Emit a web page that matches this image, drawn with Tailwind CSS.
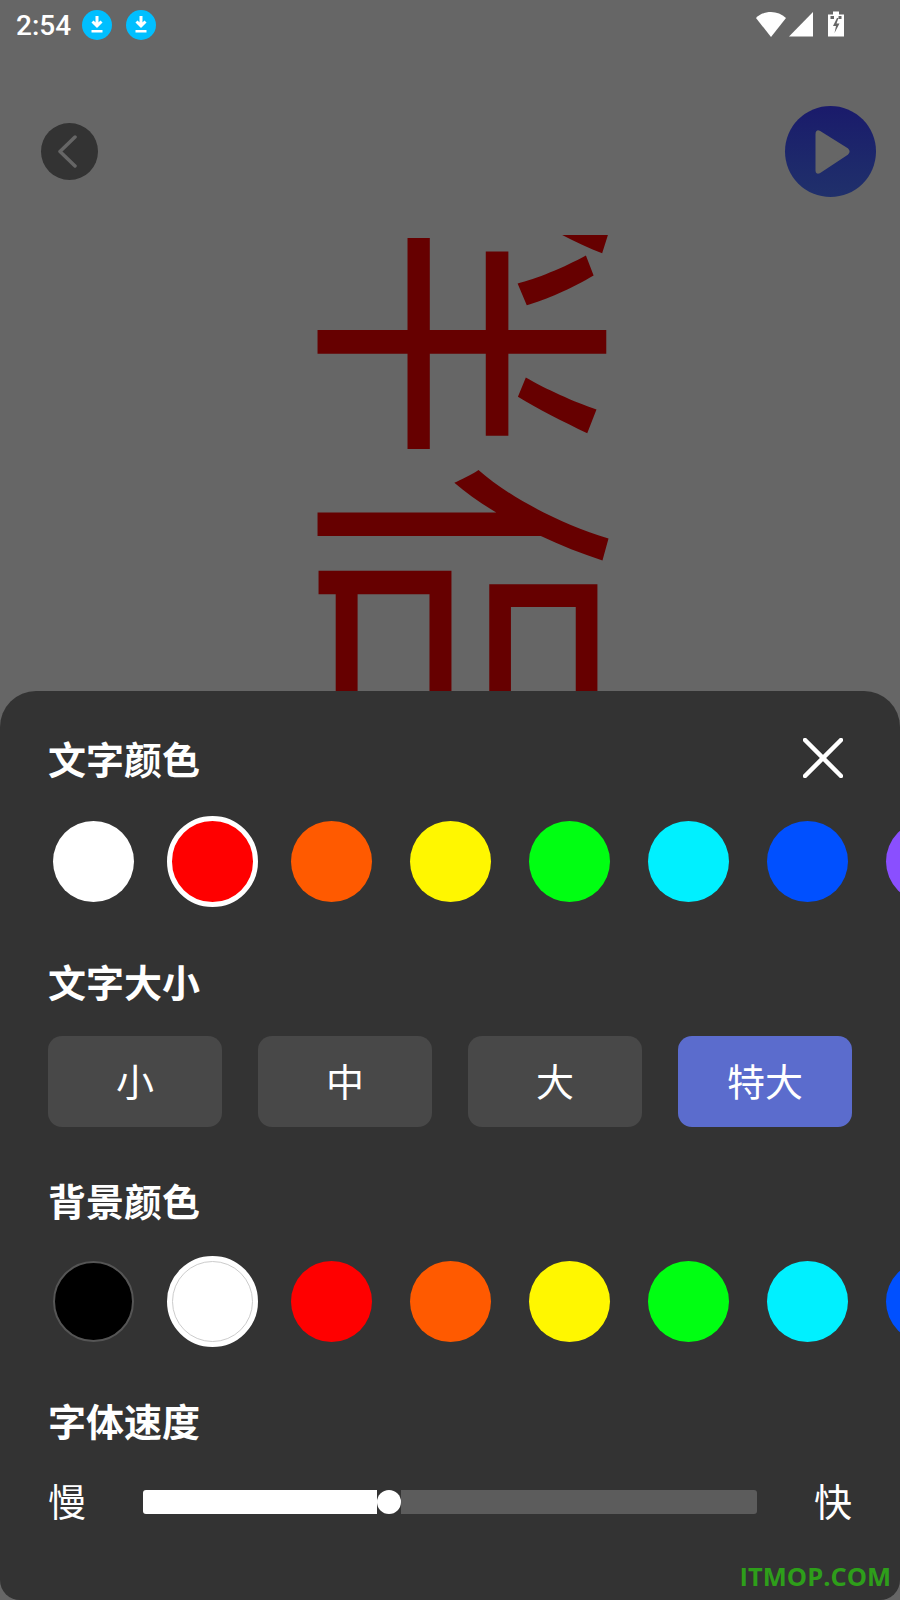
<!DOCTYPE html>
<html lang="zh">
<head>
<meta charset="utf-8">
<script src="https://cdn.jsdelivr.net/npm/@tailwindcss/browser@4"></script>
</head>
<body class="m-0">
<div class="w-[900px] h-[1600px] flex flex-col overflow-hidden bg-[#666666] font-['Noto_Sans_CJK_SC','Noto_Sans',sans-serif]">
  <div class="relative h-[691px] shrink-0">
    <div class="absolute left-0 right-0 top-[235px] bottom-0 overflow-hidden">
      <div class="absolute left-[640px] top-[-92px] origin-top-left rotate-90 whitespace-nowrap text-[318px] leading-none text-[#660000]">伴侣</div>
    </div>
    <div class="relative flex items-center h-[50px] pl-4 text-white">
      <span class="font-['Roboto',sans-serif] font-medium text-[28px] leading-none mt-[1px]">2:54</span>
      <svg class="ml-[11px] -mt-[1px]" width="30" height="30" viewBox="0 0 30 30"><circle cx="15" cy="15" r="15" fill="#00bfff"/><path d="M15 6v10M10.500 11.500l4.500 4.500 4.500-4.500" fill="none" stroke="#fff" stroke-width="3"/><rect x="9.500" y="20" width="11" height="2.500" fill="#fff"/></svg>
      <svg class="ml-[14px] -mt-[1px]" width="30" height="30" viewBox="0 0 30 30"><circle cx="15" cy="15" r="15" fill="#00bfff"/><path d="M15 6v10M10.500 11.500l4.500 4.500 4.500-4.500" fill="none" stroke="#fff" stroke-width="3"/><rect x="9.500" y="20" width="11" height="2.500" fill="#fff"/></svg>
      <div class="ml-auto mr-[52px] flex items-start h-[30px]">
        <svg width="92" height="30" viewBox="0 0 92 30" class="mt-[1px]"><path d="M0 6.500C8 -1.500 22 -1.500 30 6.500L15 25.500Z" fill="#fff" transform="translate(0 0.500)"/><path d="M33 25.500L57 1V25.500Z" fill="#fff"/><path d="M72 3.500h5V0.500h6v3h5V25.500H72Z" fill="#fff"/><path d="M81 7l-4 8h3l-1.500 7 5-9.500h-3l2-5.500z" fill="#666"/><rect x="74.500" y="5" width="3.500" height="3" fill="#666"/><rect x="82.500" y="5" width="3" height="3" fill="#666"/></svg>
      </div>
    </div>
    <div class="relative flex items-center justify-between mt-[56px] pl-[41px] pr-[24px]">
      <div class="w-[57px] h-[57px] rounded-full bg-[#333333] flex items-center justify-center">
        <svg width="20" height="33" viewBox="0 0 20 33" class="-ml-[4px]"><path d="M17 2L2 16.500L17 31" fill="none" stroke="#666" stroke-width="3.500" stroke-linecap="round" stroke-linejoin="round"/></svg>
      </div>
      <div class="w-[91px] h-[91px] rounded-full bg-gradient-to-b from-[#1a1a6b] to-[#20306b] flex items-center justify-center">
        <svg width="91" height="91" viewBox="0 0 91 91"><path d="M34 26L62 43.500Q64 45.500 62 47.500L34 66Q32 67 32 64.500V28Q32 25 34 26Z" fill="#666" stroke="#666" stroke-width="3" stroke-linejoin="round"/></svg>
      </div>
    </div>
  </div>

  <div class="relative flex-1 bg-[#333333] rounded-t-[36px] rounded-b-[20px] pt-[45px] text-white">
    <div class="flex items-center justify-between pl-[48px] pr-[57px] h-[44px]">
      <h2 class="text-[38px] font-bold leading-none">文字颜色</h2>
      <svg width="40" height="40" viewBox="0 0 40 40"><path d="M2 2L38 38M38 2L2 38" stroke="#fff" stroke-width="4.500" stroke-linecap="round"/></svg>
    </div>
    <div class="mt-[36px] pl-[48px] flex gap-[28px] overflow-hidden">
      <div class="shrink-0 w-[91px] h-[91px] flex items-center justify-center"><div class="w-[81px] h-[81px] rounded-full bg-white"></div></div>
      <div class="shrink-0 w-[91px] h-[91px] rounded-full border-[5px] border-white bg-[#ff0000]"></div>
      <div class="shrink-0 w-[91px] h-[91px] flex items-center justify-center"><div class="w-[81px] h-[81px] rounded-full bg-[#ff5a00]"></div></div>
      <div class="shrink-0 w-[91px] h-[91px] flex items-center justify-center"><div class="w-[81px] h-[81px] rounded-full bg-[#fff700]"></div></div>
      <div class="shrink-0 w-[91px] h-[91px] flex items-center justify-center"><div class="w-[81px] h-[81px] rounded-full bg-[#00ff12]"></div></div>
      <div class="shrink-0 w-[91px] h-[91px] flex items-center justify-center"><div class="w-[81px] h-[81px] rounded-full bg-[#00f0ff]"></div></div>
      <div class="shrink-0 w-[91px] h-[91px] flex items-center justify-center"><div class="w-[81px] h-[81px] rounded-full bg-[#0050ff]"></div></div>
      <div class="shrink-0 w-[91px] h-[91px] flex items-center justify-center"><div class="w-[81px] h-[81px] rounded-full bg-[#8a4fff]"></div></div>
    </div>

    <h2 class="mt-[52px] pl-[48px] text-[38px] font-bold leading-[44px]">文字大小</h2>
    <div class="mt-[33px] px-[48px] grid grid-cols-4 gap-[36px] text-[38px] leading-none">
      <div class="h-[91px] rounded-[14px] bg-[#484848] flex items-center justify-center pb-[4px]">小</div>
      <div class="h-[91px] rounded-[14px] bg-[#484848] flex items-center justify-center pb-[4px]">中</div>
      <div class="h-[91px] rounded-[14px] bg-[#484848] flex items-center justify-center pb-[4px]">大</div>
      <div class="h-[91px] rounded-[14px] bg-[#5b6ccd] flex items-center justify-center pb-[4px]">特大</div>
    </div>

    <h2 class="mt-[51px] pl-[48px] text-[38px] font-bold leading-[44px]">背景颜色</h2>
    <div class="mt-[34px] pl-[48px] flex gap-[28px] overflow-hidden">
      <div class="shrink-0 w-[91px] h-[91px] flex items-center justify-center"><div class="w-[81px] h-[81px] rounded-full bg-black border-2 border-[#555555]"></div></div>
      <div class="shrink-0 w-[91px] h-[91px] rounded-full border-[5px] border-white bg-white flex"><div class="flex-1 rounded-full border border-[#cccccc]"></div></div>
      <div class="shrink-0 w-[91px] h-[91px] flex items-center justify-center"><div class="w-[81px] h-[81px] rounded-full bg-[#ff0000]"></div></div>
      <div class="shrink-0 w-[91px] h-[91px] flex items-center justify-center"><div class="w-[81px] h-[81px] rounded-full bg-[#ff5a00]"></div></div>
      <div class="shrink-0 w-[91px] h-[91px] flex items-center justify-center"><div class="w-[81px] h-[81px] rounded-full bg-[#fff700]"></div></div>
      <div class="shrink-0 w-[91px] h-[91px] flex items-center justify-center"><div class="w-[81px] h-[81px] rounded-full bg-[#00ff12]"></div></div>
      <div class="shrink-0 w-[91px] h-[91px] flex items-center justify-center"><div class="w-[81px] h-[81px] rounded-full bg-[#00f0ff]"></div></div>
      <div class="shrink-0 w-[91px] h-[91px] flex items-center justify-center"><div class="w-[81px] h-[81px] rounded-full bg-[#0050ff]"></div></div>
    </div>

    <h2 class="mt-[51px] pl-[48px] text-[38px] font-bold leading-[44px]">字体速度</h2>
    <div class="mt-[41px] pl-[48px] pr-[48px] flex items-center h-[38px] text-[38px] leading-none">
      <span class="w-[95px] -mt-[4px]">慢</span>
      <div class="flex w-[614px] h-[24px] items-center">
        <div class="w-[234px] h-full bg-white rounded-l-[3px]"></div>
        <div class="w-[24px] h-[24px] rounded-full bg-white"></div>
        <div class="flex-1 h-full bg-[#5c5c5c] rounded-r-[3px]"></div>
      </div>
      <span class="ml-auto -mt-[4px]">快</span>
    </div>
    <div class="absolute right-[9px] bottom-[11px] font-['Open_Sans',sans-serif] font-bold text-[25.500px] leading-none text-[#2e9e1a]">ITMOP.COM</div>
  </div>
</div>
</body>
</html>
